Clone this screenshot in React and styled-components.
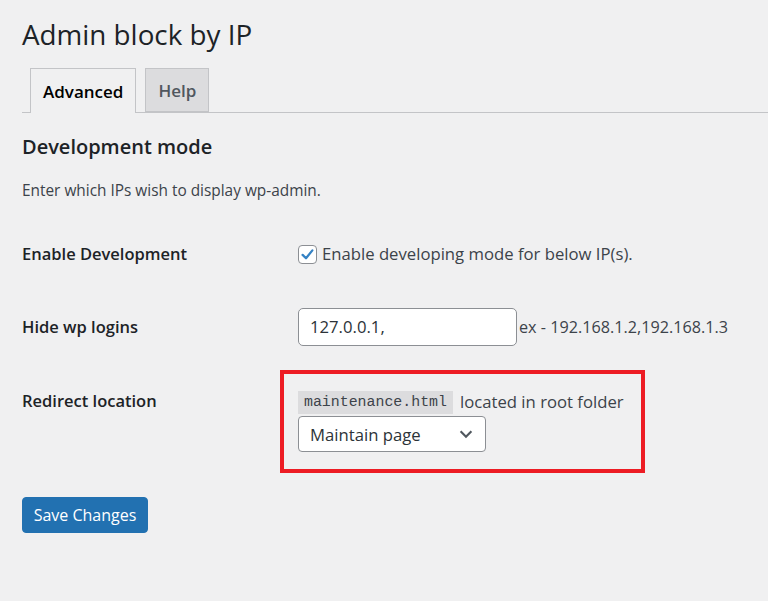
import React from "react";
import styled, { createGlobalStyle } from "styled-components";

const Global = createGlobalStyle`
  html, body { margin: 0; padding: 0; }
  body {
    background: #f0f0f1;
    color: #1d2327;
    font-family: "Open Sans", "Noto Sans", sans-serif;
  }
`;

const Wrap = styled.div`
  padding: 14px 0 40px 22px;
`;

const Title = styled.h1`
  margin: 0;
  font-size: 27.8px;
  font-weight: 400;
  line-height: 40px;
  color: #1d2327;
`;

const TabBar = styled.nav`
  display: flex;
  gap: 9px;
  padding-left: 8px;
  margin-top: 14px;
  border-bottom: 1px solid #c3c4c7;
  height: 44px;
  align-items: flex-end;
`;

const Tab = styled.a`
  display: flex;
  align-items: center;
  box-sizing: border-box;
  height: ${(p) => (p.$active ? "45px" : "44px")};
  margin-bottom: ${(p) => (p.$active ? "-1px" : "0")};
  padding: 0 12px;
  border: 1px solid #c3c4c7;
  border-bottom: ${(p) => (p.$active ? "none" : "1px solid #c3c4c7")};
  background: ${(p) => (p.$active ? "#f0f0f1" : "#dcdcde")};
  color: ${(p) => (p.$active ? "#000" : "#50575e")};
  font-size: 17px;
  font-weight: 600;
  text-decoration: none;
`;

const Heading = styled.h2`
  margin: 20px 0 0;
  font-size: 20px;
  font-weight: 600;
  line-height: 28px;
`;

const Description = styled.p`
  margin: 18px 0 0;
  font-size: 15.4px;
  line-height: 24px;
  color: #3c434a;
`;

const Rows = styled.div`
  display: flex;
  flex-direction: column;
  margin-top: 39px;
`;

const Row = styled.div`
  display: grid;
  grid-template-columns: 276px 1fr;
  align-items: start;
  padding-top: ${(p) => p.$top || 0}px;
`;

const Label = styled.div`
  font-size: 16.5px;
  font-weight: 600;
  line-height: 24px;
  color: #1d2327;
  padding-top: ${(p) => p.$offset || 0}px;
`;

const Field = styled.div`
  display: flex;
  align-items: center;
  flex-wrap: wrap;
  font-size: 16.7px;
  line-height: 24px;
  color: #3c434a;
`;

const CheckLine = styled.label`
  display: flex;
  align-items: center;
  gap: 5px;
`;

const Box = styled.span`
  box-sizing: border-box;
  width: 19px;
  height: 19px;
  border: 1px solid #8c8f94;
  border-radius: 4px;
  background: #fff;
  display: flex;
  align-items: center;
  justify-content: center;
`;

const TextInput = styled.div`
  box-sizing: border-box;
  width: 219px;
  height: 38px;
  border: 1px solid #8c8f94;
  border-radius: 5px;
  background: #fff;
  padding: 0 11px;
  display: flex;
  align-items: center;
  font-size: 16.7px;
  color: #2c3338;
`;

const Hint = styled.span`
  margin-left: 2px;
  font-size: 16.2px;
  color: #3c434a;
`;

const Highlight = styled.div`
  box-sizing: border-box;
  margin-left: -18px;
  width: 365px;
  height: 103px;
  border: 4px solid #ed1c24;
  padding: 16px 0 0 14px;
  display: flex;
  flex-direction: column;
  align-items: flex-start;
`;

const CodeLine = styled.div`
  display: flex;
  align-items: center;
  gap: 7px;
  font-size: 16.7px;
  line-height: 24px;
  color: #3c434a;
`;

const Code = styled.code`
  background: #dcdcde;
  font-family: "Liberation Mono", "DejaVu Sans Mono", monospace;
  font-size: 14.9px;
  line-height: 23px;
  padding: 0 6px;
  color: #3c434a;
`;

const Select = styled.div`
  box-sizing: border-box;
  margin-top: 2px;
  width: 188px;
  height: 36px;
  border: 1px solid #8c8f94;
  border-radius: 4px;
  background: #fff;
  padding: 0 10px 0 11px;
  display: flex;
  align-items: center;
  justify-content: space-between;
  font-size: 16.7px;
  color: #2c3338;
`;

const Button = styled.button`
  margin-top: 24px;
  box-sizing: border-box;
  width: 126px;
  height: 36px;
  border: 1px solid #2271b1;
  border-radius: 4px;
  background: #2271b1;
  color: #fff;
  font-family: inherit;
  font-size: 16px;
  padding: 0;
`;

export default function App() {
  return (
    <>
      <Global />
      <Wrap>
        <Title>Admin block by IP</Title>
        <TabBar>
          <Tab $active>Advanced</Tab>
          <Tab>Help</Tab>
        </TabBar>
        <Heading>Development mode</Heading>
        <Description>Enter which IPs wish to display wp-admin.</Description>
        <Rows>
          <Row>
            <Label>Enable Development</Label>
            <Field>
              <CheckLine>
                <Box>
                  <svg width="15" height="15" viewBox="0 0 20 20">
                    <path
                      d="M3.5 10.5 L8 15 L16.5 4.5"
                      fill="none"
                      stroke="#3582c4"
                      strokeWidth="3"
                      strokeLinecap="round"
                      strokeLinejoin="round"
                    />
                  </svg>
                </Box>
                Enable developing mode for below IP(s).
              </CheckLine>
            </Field>
          </Row>
          <Row $top={42}>
            <Label $offset={7}>Hide wp logins</Label>
            <Field>
              <TextInput>127.0.0.1,</TextInput>
              <Hint>ex - 192.168.1.2,192.168.1.3</Hint>
            </Field>
          </Row>
          <Row $top={24}>
            <Label $offset={19}>Redirect location</Label>
            <Highlight>
              <CodeLine>
                <Code>maintenance.html</Code>
                located in root folder
              </CodeLine>
              <Select>
                Maintain page
                <svg width="18" height="18" viewBox="0 0 20 20">
                  <path
                    d="M4 7 L10 13 L16 7"
                    fill="none"
                    stroke="#50575e"
                    strokeWidth="2.4"
                  />
                </svg>
              </Select>
            </Highlight>
          </Row>
        </Rows>
        <Button>Save Changes</Button>
      </Wrap>
    </>
  );
}
